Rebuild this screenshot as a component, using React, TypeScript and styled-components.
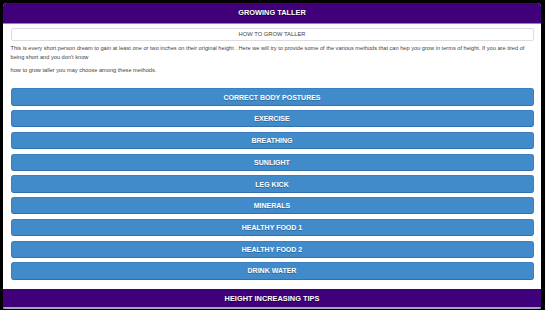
import styled, { createGlobalStyle } from "styled-components";

const GlobalStyle = createGlobalStyle`
  html, body {
    margin: 0;
    padding: 0;
    background: #000;
  }
  body {
    font-family: "Liberation Sans", Arial, sans-serif;
  }
`;

const Frame = styled.div`
  width: 545px;
  height: 310px;
  box-sizing: border-box;
  padding: 3px 4px 1px 3px;
  background: #000;
`;

const Screen = styled.div`
  height: 100%;
  display: flex;
  flex-direction: column;
  background: #fff;
  border-radius: 4px 4px 2px 2px;
  overflow: hidden;
`;

const Bar = styled.div<{ $bottom?: boolean }>`
  flex: none;
  height: ${(p) => (p.$bottom ? "18px" : "19.5px")};
  display: flex;
  align-items: center;
  justify-content: center;
  background: #3f007a;
  color: #fff;
  font-size: 7.4px;
  font-weight: 700;
  text-shadow: 0 1px 0 #111;
  border-bottom: ${(p) => (p.$bottom ? "2px solid #a7a7b4" : "1px solid #8f80c8")};
`;

const Content = styled.div`
  flex: 1;
  padding: 4px 7.5px 0 7.5px;
  display: flex;
  flex-direction: column;
`;

const SubTitle = styled.div`
  height: 13.4px;
  box-sizing: border-box;
  border: 1px solid #dcdcdc;
  border-radius: 2px;
  display: flex;
  align-items: center;
  justify-content: center;
  font-size: 5.8px;
  color: #444;
`;

const Para = styled.p`
  margin: 3.5px 0 0 0;
  font-size: 5.65px;
  line-height: 9px;
  color: #444;
`;

const Methods = styled.div`
  margin-top: 13.5px;
  display: flex;
  flex-direction: column;
  gap: 4.4px;
`;

const MethodButton = styled.div`
  height: 17.35px;
  box-sizing: border-box;
  display: flex;
  align-items: center;
  justify-content: center;
  background: #418bca;
  border: 1px solid #3a7fc0;
  border-bottom-color: #2f70ad;
  border-radius: 3px;
  color: #fff;
  font-size: 7px;
  font-weight: 700;
  text-shadow: 0 1px 0 #2d6a9f;
`;

const METHODS = [
  "CORRECT BODY POSTURES",
  "EXERCISE",
  "BREATHING",
  "SUNLIGHT",
  "LEG KICK",
  "MINERALS",
  "HEALTHY FOOD 1",
  "HEALTHY FOOD 2",
  "DRINK WATER",
];

const App = () => {
  return (
    <>
      <GlobalStyle />
      <Frame>
        <Screen>
          <Bar>GROWING TALLER</Bar>
          <Content>
            <SubTitle>HOW TO GROW TALLER</SubTitle>
            <Para>
              This is every short person dream to gain at least one or two
              inches on their original height . Here we will try to provide
              some of the various methods that can hep you grow in terms of
              height. If you are tired of being short and you don't know
            </Para>
            <Para>how to grow taller you may choose among these methods.</Para>
            <Methods>
              {METHODS.map((m) => (
                <MethodButton key={m}>{m}</MethodButton>
              ))}
            </Methods>
          </Content>
          <Bar $bottom>HEIGHT INCREASING TIPS</Bar>
        </Screen>
      </Frame>
    </>
  );
};

export default App;
